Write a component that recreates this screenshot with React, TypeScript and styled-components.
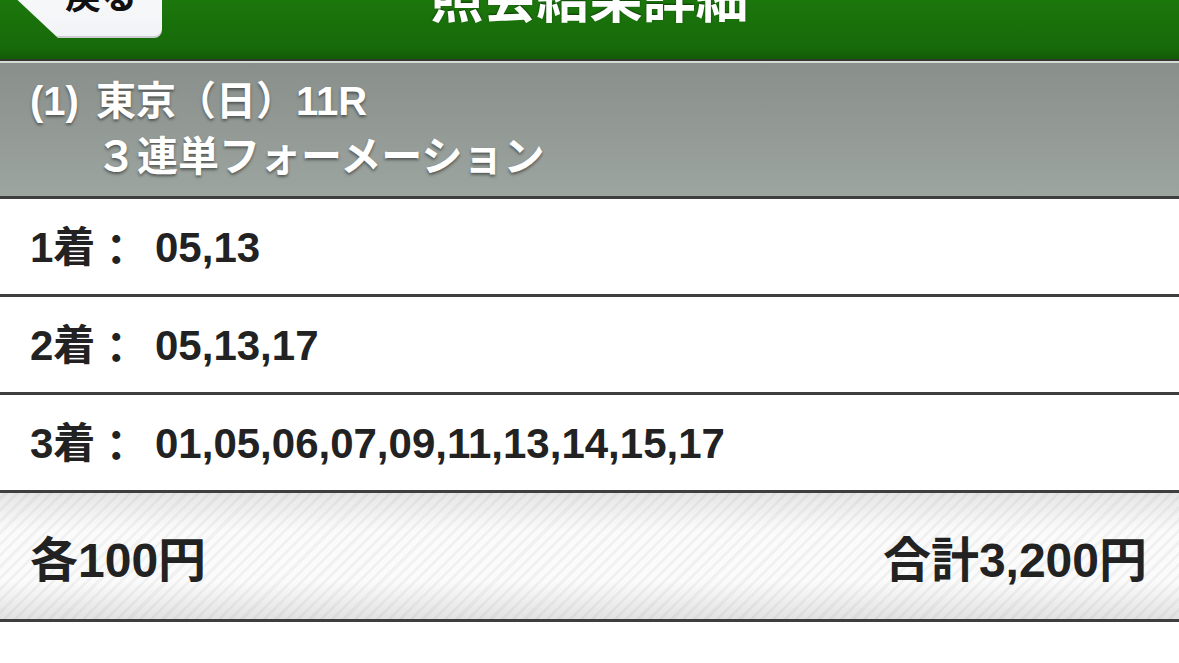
import React from "react";
import styled, { createGlobalStyle } from "styled-components";

const Global = createGlobalStyle`
  html, body { margin: 0; padding: 0; background: #ffffff; }
  body {
    font-family: "Liberation Sans", "Noto Sans CJK JP", sans-serif;
    overflow: hidden;
    text-spacing-trim: space-all;
  }
`;

const Page = styled.div`
  margin-top: -73px;
  display: flex;
  flex-direction: column;
  background: #ffffff;
`;

const NavBar = styled.header`
  height: 132px;
  display: grid;
  grid-template-columns: 1fr auto 1fr;
  align-items: center;
  background: linear-gradient(#239012 0%, #1b750c 60%, #176a09 92%, #135a07 100%);
  border-bottom: 2px solid #2f3a2c;
  box-shadow: 0 2px 0 #d5dad6;
  position: relative;
  z-index: 1;
`;

const BackButton = styled.button`
  justify-self: start;
  margin-left: 10px;
  width: 152px;
  height: 90px;
  border: none;
  border-radius: 8px;
  background: linear-gradient(#ffffff, #f1f3f6);
  clip-path: polygon(0 50%, 48px 0, 100% 0, 100% 100%, 48px 100%);
  box-shadow: inset 0 -2px 0 rgba(0, 0, 0, 0.15);
  font-family: "Noto Sans CJK JP", sans-serif;
  font-weight: 700;
  font-size: 36px;
  color: #111;
  padding: 0 0 0 30px;
  line-height: 1;
`;

const Title = styled.h1`
  margin: 0;
  font-family: "Noto Sans CJK JP", sans-serif;
  font-weight: 700;
  font-size: 53px;
  line-height: 1;
  color: #ffffff;
  text-shadow: 0 -1px 2px rgba(0, 0, 0, 0.5);
  transform: translateY(2px);
`;

const RaceInfo = styled.section`
  margin-top: 2px;
  height: 136px;
  box-sizing: border-box;
  padding: 10px 30px 0 30px;
  background: linear-gradient(#898f8b, #9da5a0);
  border-bottom: 3px solid #3e3e3e;
  color: #ffffff;
  font-weight: 700;
  text-shadow: 0 2px 3px rgba(0, 0, 0, 0.45);
`;

const InfoLine = styled.div<{ $indent?: number; $size: number }>`
  padding-left: ${(p) => p.$indent ?? 0}px;
  font-size: ${(p) => p.$size}px;
  line-height: 56px;
  white-space: nowrap;
`;

const Gap = styled.span`
  display: inline-block;
  width: 17px;
`;

const Row = styled.div`
  height: 95px;
  display: flex;
  align-items: center;
  padding-left: 30px;
  border-bottom: 3px solid #3e3e3e;
  color: #222;
  font-weight: 700;
  font-size: 42px;
  background: #ffffff;
`;

const RowContent = styled.div`
  display: flex;
  align-items: baseline;
  transform: translateY(-3px);
`;

const RowLabel = styled.span`
  width: 125px;
  flex-shrink: 0;
  white-space: nowrap;
`;

const Colon = styled.span`
  display: inline-block;
  transform: translateY(3px);
`;

const RowValue = styled.span`
  white-space: nowrap;
`;

const Summary = styled.div`
  height: 126px;
  display: flex;
  align-items: center;
  justify-content: space-between;
  padding: 0 32px 0 30px;
  border-bottom: 3px solid #3e3e3e;
  color: #222;
  font-weight: 700;
  font-size: 48px;
  background:
    repeating-linear-gradient(
      -45deg,
      rgba(255, 255, 255, 0) 0px,
      rgba(255, 255, 255, 0) 5px,
      rgba(0, 0, 0, 0.04) 5px,
      rgba(0, 0, 0, 0.04) 8px
    ),
    linear-gradient(#e6e6e6 0%, #fbfbfb 30%, #fbfbfb 70%, #e2e2e2 100%);
`;

const rows = [
  { label: "1着", value: "05,13" },
  { label: "2着", value: "05,13,17" },
  { label: "3着", value: "01,05,06,07,09,11,13,14,15,17" },
];

export default function App() {
  return (
    <>
      <Global />
      <Page>
        <NavBar>
          <BackButton>戻る</BackButton>
          <Title>照会結果詳細</Title>
          <span />
        </NavBar>
        <RaceInfo>
          <InfoLine $size={40}>
            (1)
            <Gap />
            東京（日）11R
          </InfoLine>
          <InfoLine $size={41} $indent={66}>
            ３連単フォーメーション
          </InfoLine>
        </RaceInfo>
        {rows.map((r) => (
          <Row key={r.label}>
            <RowContent>
              <RowLabel>
                {r.label}
                <Colon>：</Colon>
              </RowLabel>
              <RowValue>{r.value}</RowValue>
            </RowContent>
          </Row>
        ))}
        <Summary>
          <span>各100円</span>
          <span>合計3,200円</span>
        </Summary>
      </Page>
    </>
  );
}
